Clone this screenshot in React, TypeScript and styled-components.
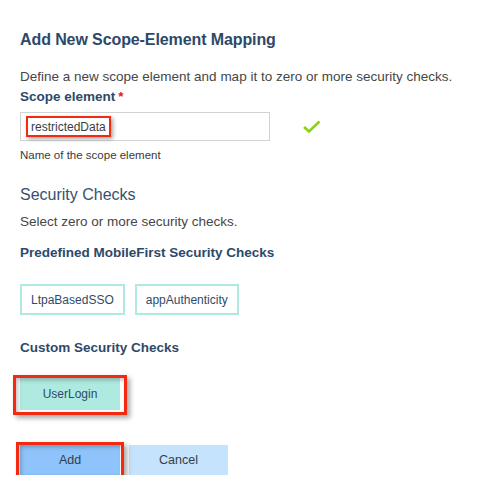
import React from "react";
import styled, { createGlobalStyle } from "styled-components";

const Global = createGlobalStyle`
  html, body { margin: 0; padding: 0; background: #ffffff; }
  body { font-family: "Liberation Sans", Arial, sans-serif; }
`;

const Page = styled.div`
  padding: 30px 20px 0 20px;
  display: flex;
  flex-direction: column;
  align-items: flex-start;
  color: #2c4a6b;
`;

const Title = styled.h1`
  margin: 0;
  font-size: 16px;
  line-height: 20px;
  font-weight: bold;
  letter-spacing: -0.1px;
  color: #2d4969;
`;

const Text = styled.p<{ $top: number }>`
  margin: ${(p) => p.$top}px 0 0 0;
  font-size: 13.5px;
  line-height: 18px;
  color: #464646;
  white-space: nowrap;
`;

const Label = styled.div<{ $top: number }>`
  margin-top: ${(p) => p.$top}px;
  font-size: 13.5px;
  line-height: 18px;
  font-weight: bold;
  color: #2d4969;
`;

const Required = styled.span`
  color: #e0182d;
  margin-left: 3px;
`;

const InputRow = styled.div`
  margin-top: 6px;
  display: flex;
  align-items: center;
`;

const Field = styled.div`
  box-sizing: border-box;
  width: 250px;
  height: 29px;
  border: 1px solid #cfd3d3;
  display: flex;
  align-items: center;
  padding-left: 5px;
`;

const MarkedValue = styled.span`
  box-sizing: border-box;
  display: inline-flex;
  align-items: center;
  height: 21px;
  padding: 0 3px 0 3px;
  border: 2px solid #f22a12;
  box-shadow: 2px 2px 4px rgba(0, 0, 0, 0.35);
  font-size: 12px;
  color: #3d3d3d;
`;

const Check = styled.svg`
  margin-left: 33px;
  width: 18px;
  height: 14px;
`;

const Helper = styled.div`
  margin-top: 7px;
  font-size: 11.5px;
  line-height: 14px;
  color: #3a3a3a;
`;

const Section = styled.h2`
  margin: 22px 0 0 0;
  font-size: 16px;
  line-height: 22px;
  font-weight: normal;
  color: #36506f;
`;

const ChipRow = styled.div<{ $top: number }>`
  margin-top: ${(p) => p.$top}px;
  display: flex;
  gap: 10px;
`;

const Chip = styled.div<{ $selected?: boolean }>`
  box-sizing: border-box;
  height: ${(p) => (p.$selected ? 32 : 31)}px;
  padding: 0 ${(p) => (p.$selected ? 0 : 9)}px;
  display: flex;
  align-items: center;
  justify-content: center;
  border: 2px solid #aeeadf;
  background: ${(p) => (p.$selected ? "#aeeadf" : "#ffffff")};
  font-size: 12px;
  color: #2f4b68;
  ${(p) => (p.$selected ? "width: 100px;" : "")}
`;

const Marked = styled.div<{ $l: number; $t: number; $r: number; $b: number }>`
  position: relative;
  &::after {
    content: "";
    position: absolute;
    left: -${(p) => p.$l}px;
    top: -${(p) => p.$t}px;
    right: -${(p) => p.$r}px;
    bottom: -${(p) => p.$b}px;
    border: 3px solid #f22a12;
    box-shadow: 3px 3px 5px rgba(0, 0, 0, 0.35), inset 2px 2px 4px rgba(0, 0, 0, 0.25);
    pointer-events: none;
  }
`;

const Actions = styled.div`
  margin-top: 35px;
  display: flex;
  gap: 9px;
`;

const Button = styled.button<{ $primary?: boolean }>`
  box-sizing: border-box;
  width: ${(p) => (p.$primary ? 100 : 99)}px;
  height: 30px;
  border: none;
  margin: 0;
  padding: 0;
  background: ${(p) => (p.$primary ? "#8ec4fb" : "#c6e3fd")};
  font-family: "Liberation Sans", Arial, sans-serif;
  font-size: 12.5px;
  color: #333d47;
`;

export default function App() {
  return (
    <>
      <Global />
      <Page>
        <Title>Add New Scope-Element Mapping</Title>
        <Text $top={18}>Define a new scope element and map it to zero or more security checks.</Text>
        <Label $top={2}>
          Scope element<Required>*</Required>
        </Label>
        <InputRow>
          <Field>
            <MarkedValue>restrictedData</MarkedValue>
          </Field>
          <Check viewBox="0 0 18 14">
            <polyline points="1,7 6,11.5 16.5,1.5" fill="none" stroke="#8cd211" strokeWidth="2.6" />
          </Check>
        </InputRow>
        <Helper>Name of the scope element</Helper>
        <Section>Security Checks</Section>
        <Text $top={7}>Select zero or more security checks.</Text>
        <Label $top={13}>Predefined MobileFirst Security Checks</Label>
        <ChipRow $top={22}>
          <Chip>LtpaBasedSSO</Chip>
          <Chip>appAuthenticity</Chip>
        </ChipRow>
        <Label $top={24}>Custom Security Checks</Label>
        <ChipRow $top={21}>
          <Marked $l={7} $t={3} $r={7} $b={5}>
            <Chip $selected>UserLogin</Chip>
          </Marked>
        </ChipRow>
        <Actions>
          <Marked $l={4} $t={3} $r={4} $b={3}>
            <Button $primary>Add</Button>
          </Marked>
          <Button>Cancel</Button>
        </Actions>
      </Page>
    </>
  );
}
